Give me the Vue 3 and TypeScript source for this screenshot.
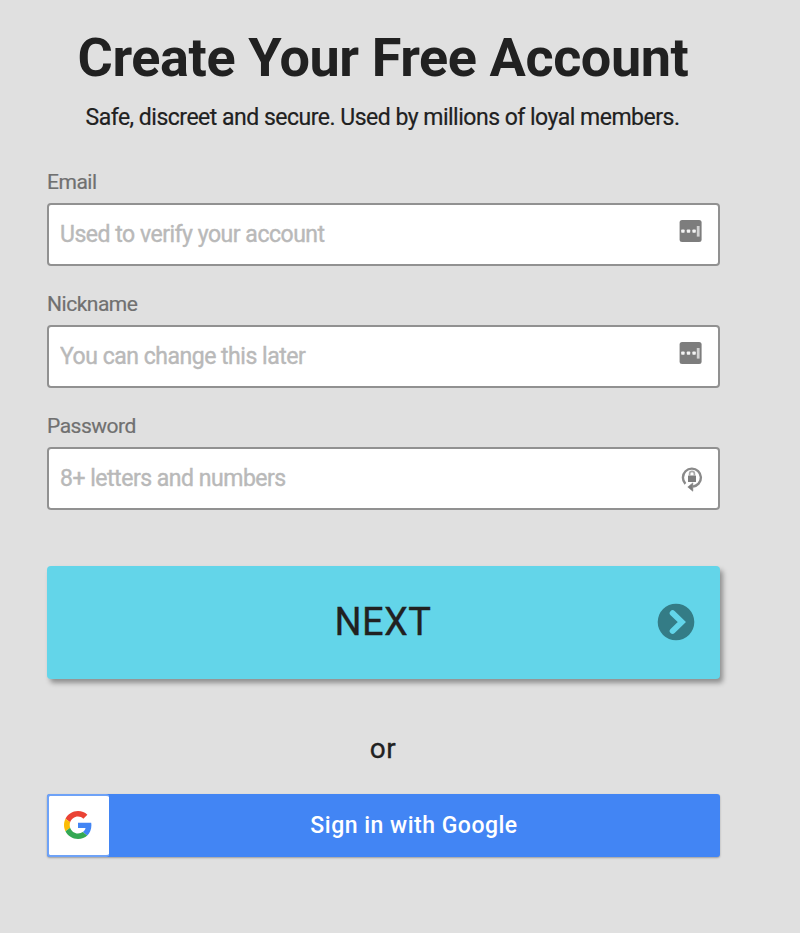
<script setup lang="ts">
import { reactive } from 'vue'

interface Field {
  id: 'email' | 'nickname' | 'password'
  label: string
  type: string
  placeholder: string
  icon: 'autofill' | 'generate'
}

const fields: Field[] = [
  { id: 'email', label: 'Email', type: 'email', placeholder: 'Used to verify your account', icon: 'autofill' },
  { id: 'nickname', label: 'Nickname', type: 'text', placeholder: 'You can change this later', icon: 'autofill' },
  { id: 'password', label: 'Password', type: 'password', placeholder: '8+ letters and numbers', icon: 'generate' },
]

const form = reactive({ email: '', nickname: '', password: '' })
</script>

<template>
  <main class="page">
    <form class="signup" @submit.prevent>
      <h1 class="title">Create Your Free Account</h1>
      <p class="subtitle">Safe, discreet and secure. Used by millions of loyal members.</p>

      <div class="fields">
        <div v-for="field in fields" :key="field.id" class="field">
          <label class="label" :for="field.id">{{ field.label }}</label>
          <div class="control">
            <input
              :id="field.id"
              v-model="form[field.id]"
              class="input"
              :type="field.type"
              :placeholder="field.placeholder"
            />
            <svg v-if="field.icon === 'autofill'" class="autofill" viewBox="0 0 24 24">
              <rect x=".6" y="1" width="22" height="22" rx="2.5" fill="#7d7d7d" />
              <rect x="2.2" y="10.6" width="3.4" height="3.2" rx=".7" fill="#f4f4f4" />
              <rect x="7.8" y="10.6" width="3.4" height="3.2" rx=".7" fill="#f4f4f4" />
              <rect x="13.4" y="10.6" width="3.4" height="3.2" rx=".7" fill="#f4f4f4" />
              <rect x="17.8" y="7" width="2.8" height="10.6" fill="#d2d2d2" />
            </svg>
            <svg v-else class="generate" viewBox="0 0 24 28">
              <path d="M5.4 18.8A9 9 0 1 1 18.6 18.6Q16.6 20.8 13 21.6" fill="none" stroke="#8a8a8a" stroke-width="2.4" />
              <path d="M12.8 17.9V26.2L7.8 22Z" fill="#7d7d7d" stroke="#7d7d7d" stroke-width=".6" />
              <rect x="8" y="10.4" width="8" height="6.6" rx=".6" fill="#7d7d7d" />
              <path d="M9.6 10.8V8.8a2.4 2.4 0 0 1 4.8 0V10.8" fill="none" stroke="#aaa" stroke-width="1.7" />
            </svg>
          </div>
        </div>
      </div>

      <button class="next" type="submit">
        <span class="next-text">NEXT</span>
        <svg class="arrow" viewBox="0 0 38 38">
          <circle cx="19" cy="19" r="18.3" fill="#347c86" />
          <path d="M15.6 10.2L24.8 19L15.6 28" fill="none" stroke="#63d5e9" stroke-width="5.8" stroke-linecap="round" />
        </svg>
      </button>

      <p class="or">or</p>

      <button class="google" type="button">
        <span class="google-logo">
          <svg class="g" viewBox="0 0 48 48">
            <path fill="#EA4335" d="M24 9.5c3.54 0 6.71 1.22 9.21 3.6l6.85-6.85C35.9 2.38 30.47 0 24 0 14.62 0 6.51 5.38 2.56 13.22l7.98 6.19C12.43 13.72 17.74 9.5 24 9.5z" />
            <path fill="#4285F4" d="M46.98 24.55c0-1.57-.15-3.09-.38-4.55H24v9.02h12.94c-.58 2.96-2.26 5.48-4.78 7.18l7.73 6c4.51-4.18 7.09-10.36 7.09-17.65z" />
            <path fill="#FBBC05" d="M10.53 28.59c-.48-1.45-.76-2.99-.76-4.59s.27-3.14.76-4.59l-7.98-6.19C.92 16.46 0 20.12 0 24c0 3.88.92 7.54 2.56 10.78l7.97-6.19z" />
            <path fill="#34A853" d="M24 48c6.48 0 11.93-2.13 15.89-5.81l-7.73-6c-2.15 1.45-4.92 2.3-8.16 2.3-6.26 0-11.57-4.22-13.47-9.91l-7.98 6.19C6.51 42.62 14.62 48 24 48z" />
          </svg>
        </span>
        <span class="google-label">Sign in with Google</span>
      </button>
    </form>
  </main>
</template>

<style>
body {
  background: #e0e0e0;
}
</style>

<style scoped>
.page {
  min-height: 933px;
  box-sizing: border-box;
  padding: 27px 80px 0 47px;
  background: #e0e0e0;
  color: #212121;
  font-family: Roboto, 'Liberation Sans', sans-serif;
}

.signup {
  width: 673px;
}

.title {
  margin: 0;
  padding-right: 1px;
  font-size: 54px;
  line-height: 62px;
  font-weight: 700;
  letter-spacing: -0.42px;
  text-align: center;
  white-space: nowrap;
}

.subtitle {
  margin: 14px 0 36px;
  padding-right: 2px;
  font-size: 23px;
  line-height: 30px;
  letter-spacing: -0.5px;
  text-align: center;
  white-space: nowrap;
  -webkit-text-stroke: 0.2px #212121;
}

.fields {
  display: flex;
  flex-direction: column;
  gap: 25px;
}

.field {
  display: flex;
  flex-direction: column;
  gap: 8px;
}

.label {
  height: 26px;
  font-size: 21px;
  line-height: 26px;
  letter-spacing: -0.48px;
  color: #707070;
  -webkit-text-stroke: 0.2px #707070;
}

.control {
  display: flex;
  align-items: center;
  justify-content: space-between;
  box-sizing: border-box;
  height: 63px;
  padding: 0 15px 0 11px;
  border: 2px solid #919191;
  border-radius: 4px;
  background: #fff;
}

.input {
  width: 560px;
  height: 40px;
  padding: 0;
  border: 0;
  outline: 0;
  background: transparent;
  color: #212121;
  font: 400 23px/30px Roboto, 'Liberation Sans', sans-serif;
  letter-spacing: -0.48px;
}

.input::placeholder {
  color: #b9b9b9;
  opacity: 1;
  -webkit-text-stroke: 0.4px #b9b9b9;
}

.autofill {
  width: 24px;
  height: 24px;
  margin-bottom: 7px;
}

.generate {
  width: 24px;
  height: 28px;
  margin-right: -1px;
}

.next {
  display: grid;
  grid-template-columns: 38px 1fr 38px;
  align-items: center;
  width: 100%;
  height: 113px;
  margin: 56px 0 0;
  padding: 0 25px 2px;
  border: 0;
  border-radius: 4px;
  background: #63d5e9;
  box-shadow: 3px 4px 5px rgba(0, 0, 0, 0.36);
  color: #212121;
  font: 400 38px/44px Roboto, 'Liberation Sans', sans-serif;
  letter-spacing: 0.4px;
}

.next-text {
  grid-column: 2;
  padding-right: 1px;
  -webkit-text-stroke: 0.3px #212121;
}

.arrow {
  width: 38px;
  height: 38px;
}

.or {
  margin: 52px 0 27px;
  padding-right: 1px;
  font-size: 28px;
  line-height: 36px;
  letter-spacing: 0.5px;
  text-align: center;
  -webkit-text-stroke: 0.3px #212121;
}

.google {
  display: flex;
  width: 100%;
  height: 63px;
  padding: 0;
  border: 0;
  border-radius: 3px;
  background: #4285f4;
  box-shadow: 0 1px 2px rgba(0, 0, 0, 0.3);
  color: #fff;
  font: 500 23px/30px Roboto, 'Liberation Sans', sans-serif;
  letter-spacing: 0.5px;
}

.google-logo {
  display: flex;
  align-items: center;
  justify-content: center;
  box-sizing: border-box;
  width: 62px;
  height: 63px;
  padding: 0 2px 1px 0;
  border: 2px solid #6ea2f7;
  border-right-width: 0;
  border-radius: 3px;
  background: #fff;
}

.g {
  width: 28px;
  height: 28px;
}

.google-label {
  flex: 1;
  align-self: center;
  padding-right: 1px;
  text-align: center;
}
</style>
